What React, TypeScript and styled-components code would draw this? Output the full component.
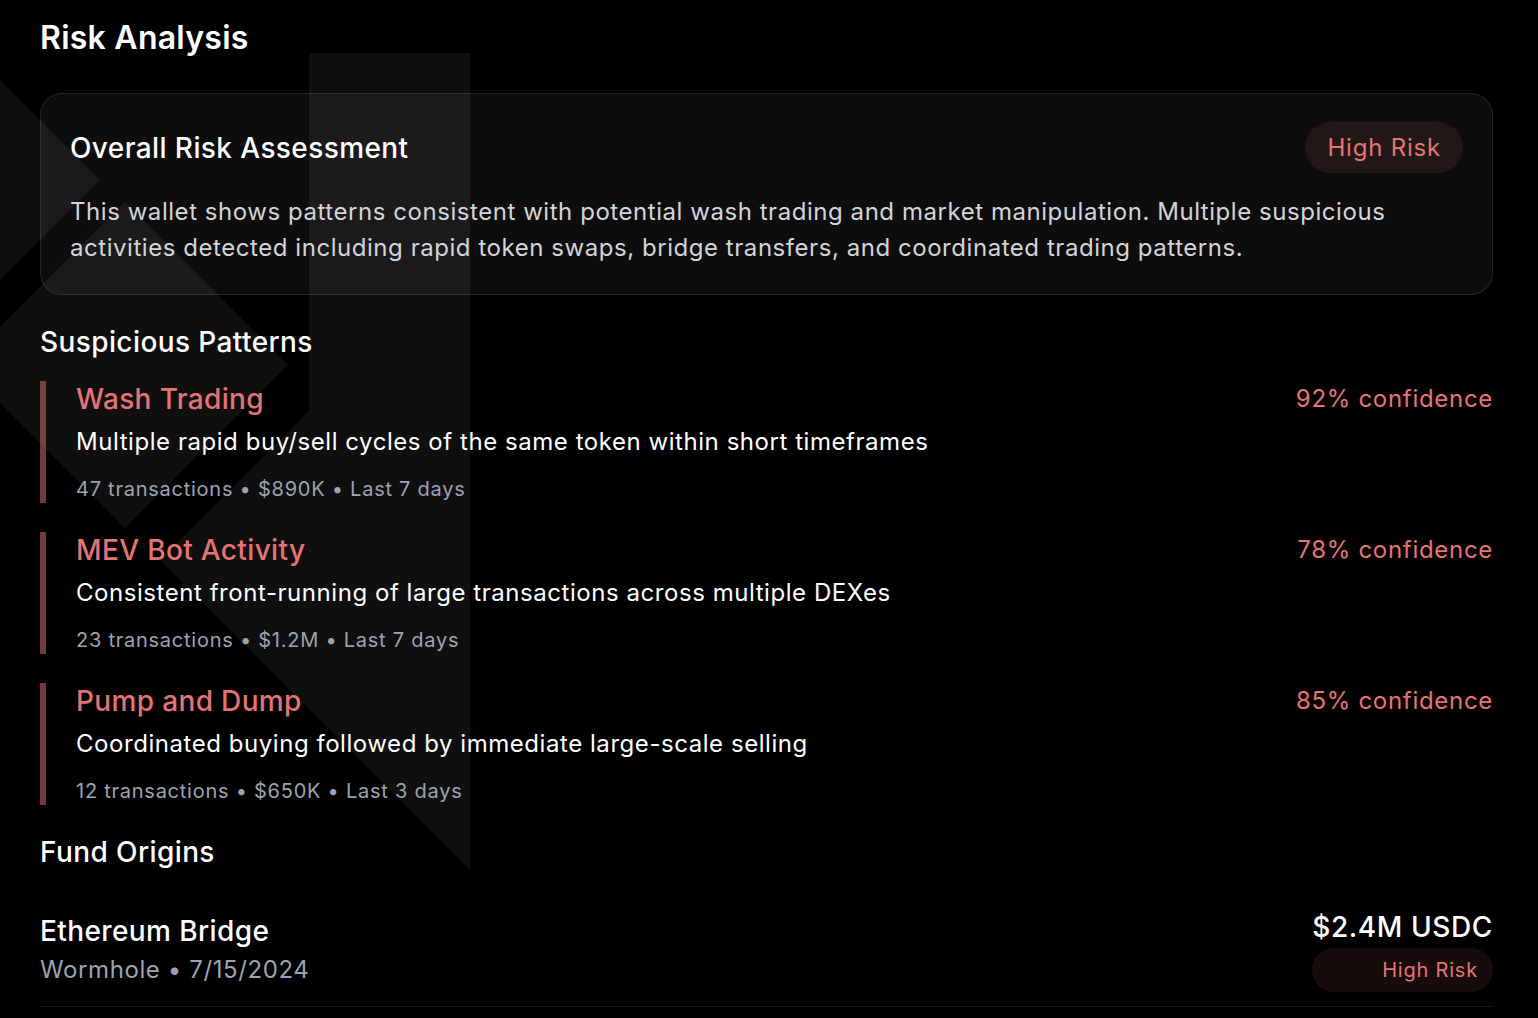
import React from 'react';
import styled, { createGlobalStyle } from 'styled-components';

const GlobalStyle = createGlobalStyle`
  html, body {
    margin: 0;
    padding: 0;
    background: #000;
    overflow: hidden;
  }
  body {
    font-family: Inter, "Noto Sans", "Liberation Sans", sans-serif;
    color: #fff;
  }
  * { box-sizing: border-box; }
`;

const coral = '#e57373';

const Page = styled.div`
  position: relative;
  min-height: 1018px;
  padding: 18px 45px 0 40px;
`;

const Watermark = styled.svg`
  position: absolute;
  left: 0;
  top: 0;
  width: 520px;
  height: 900px;
  pointer-events: none;
  z-index: 0;
`;

const Content = styled.div`
  position: relative;
  z-index: 1;
  display: flex;
  flex-direction: column;
`;

const Title = styled.h1`
  margin: 0;
  font-size: 32px;
  line-height: 40px;
  font-weight: 600;
  letter-spacing: 0.25px;
`;

const Card = styled.section`
  margin-top: 35px;
  padding: 28px 29px 28px 29px;
  border: 1px solid rgba(255, 255, 255, 0.1);
  border-radius: 22px;
  background: rgba(255, 255, 255, 0.05);
`;

const CardHead = styled.div`
  display: flex;
  align-items: center;
  justify-content: space-between;
`;

const CardTitle = styled.h2`
  margin: 0;
  font-size: 28px;
  line-height: 36px;
  font-weight: 500;
  letter-spacing: 0.4px;
`;

const Badge = styled.span<{ $size?: 'lg' | 'sm' }>`
  display: inline-flex;
  align-items: center;
  justify-content: flex-end;
  border-radius: 999px;
  background: rgba(229, 115, 115, 0.1);
  color: ${coral};
  letter-spacing: 0.8px;
  font-size: ${(p) => (p.$size === 'sm' ? '20px' : '24px')};
  height: ${(p) => (p.$size === 'sm' ? '44px' : '51px')};
  padding: ${(p) => (p.$size === 'sm' ? '0 15px' : '0 22px')};
`;

const CardText = styled.p`
  margin: 21px 0 0;
  font-size: 24px;
  line-height: 36px;
  letter-spacing: 0.55px;
  color: #d4d4d8;
`;

const SectionTitle = styled.h2<{ $gap: number }>`
  margin: ${(p) => p.$gap}px 0 0;
  font-size: 28px;
  line-height: 36px;
  font-weight: 500;
  letter-spacing: 0.4px;
`;

const PatternList = styled.div`
  margin-top: 21px;
  display: flex;
  flex-direction: column;
  gap: 29px;
`;

const Pattern = styled.div`
  display: flex;
  justify-content: space-between;
  align-items: flex-start;
  height: 122px;
  border-left: 6px solid rgba(229, 115, 115, 0.5);
  padding-left: 30px;
`;

const PatternBody = styled.div`
  display: flex;
  flex-direction: column;
`;

const PatternName = styled.div`
  color: ${coral};
  font-size: 28px;
  line-height: 36px;
  font-weight: 500;
  letter-spacing: 0.35px;
`;

const PatternDesc = styled.div`
  margin-top: 7px;
  font-size: 24px;
  line-height: 36px;
  letter-spacing: 0.55px;
`;

const Meta = styled.div`
  margin-top: 15px;
  font-size: 20px;
  line-height: 28px;
  letter-spacing: 0.75px;
  color: #9ca3af;
`;

const Confidence = styled.div`
  color: ${coral};
  font-size: 24px;
  line-height: 36px;
  letter-spacing: 0.7px;
`;

const OriginRow = styled.div`
  margin-top: 24px;
  display: flex;
  align-items: center;
  justify-content: space-between;
  padding: 15px 0 14px;
  border-bottom: 1px solid rgba(255, 255, 255, 0.1);
`;

const OriginLeft = styled.div`
  display: flex;
  flex-direction: column;
  gap: 3px;
`;

const OriginName = styled.div`
  font-size: 28px;
  line-height: 36px;
  font-weight: 500;
  letter-spacing: 0.4px;
`;

const OriginSub = styled.div`
  font-size: 24px;
  line-height: 36px;
  letter-spacing: 0.6px;
  color: #9ca3af;
`;

const OriginRight = styled.div`
  display: flex;
  flex-direction: column;
  align-items: stretch;
  gap: 3px;
  text-align: right;
`;

const Amount = styled.div`
  font-size: 28px;
  line-height: 36px;
  font-weight: 500;
  letter-spacing: 0.6px;
`;

const patterns = [
  {
    name: 'Wash Trading',
    desc: 'Multiple rapid buy/sell cycles of the same token within short timeframes',
    meta: '47 transactions • $890K • Last 7 days',
    confidence: 92,
  },
  {
    name: 'MEV Bot Activity',
    desc: 'Consistent front-running of large transactions across multiple DEXes',
    meta: '23 transactions • $1.2M • Last 7 days',
    confidence: 78,
  },
  {
    name: 'Pump and Dump',
    desc: 'Coordinated buying followed by immediate large-scale selling',
    meta: '12 transactions • $650K • Last 3 days',
    confidence: 85,
  },
];

export default function App() {
  return (
    <Page>
      <GlobalStyle />
      <Watermark viewBox="0 0 520 900">
        <g fill="#fff" fillOpacity={0.06}>
          <polygon points="-100,180 0,80 100,180 0,280" />
          <polygon points="125,202 288,365 125,528 -38,365" />
          <polygon points="309,53 470,53 470,870 160,560 309,411" />
        </g>
      </Watermark>
      <Content>
        <Title>Risk Analysis</Title>

        <Card>
          <CardHead>
            <CardTitle>Overall Risk Assessment</CardTitle>
            <Badge>High Risk</Badge>
          </CardHead>
          <CardText>
            This wallet shows patterns consistent with potential wash trading and market manipulation. Multiple suspicious
            activities detected including rapid token swaps, bridge transfers, and coordinated trading patterns.
          </CardText>
        </Card>

        <SectionTitle $gap={29}>Suspicious Patterns</SectionTitle>
        <PatternList>
          {patterns.map((p) => (
            <Pattern key={p.name}>
              <PatternBody>
                <PatternName>{p.name}</PatternName>
                <PatternDesc>{p.desc}</PatternDesc>
                <Meta>{p.meta}</Meta>
              </PatternBody>
              <Confidence>{p.confidence}% confidence</Confidence>
            </Pattern>
          ))}
        </PatternList>

        <SectionTitle $gap={29}>Fund Origins</SectionTitle>
        <OriginRow>
          <OriginLeft>
            <OriginName>Ethereum Bridge</OriginName>
            <OriginSub>Wormhole • 7/15/2024</OriginSub>
          </OriginLeft>
          <OriginRight>
            <Amount>$2.4M USDC</Amount>
            <Badge $size="sm">High Risk</Badge>
          </OriginRight>
        </OriginRow>
      </Content>
    </Page>
  );
}
